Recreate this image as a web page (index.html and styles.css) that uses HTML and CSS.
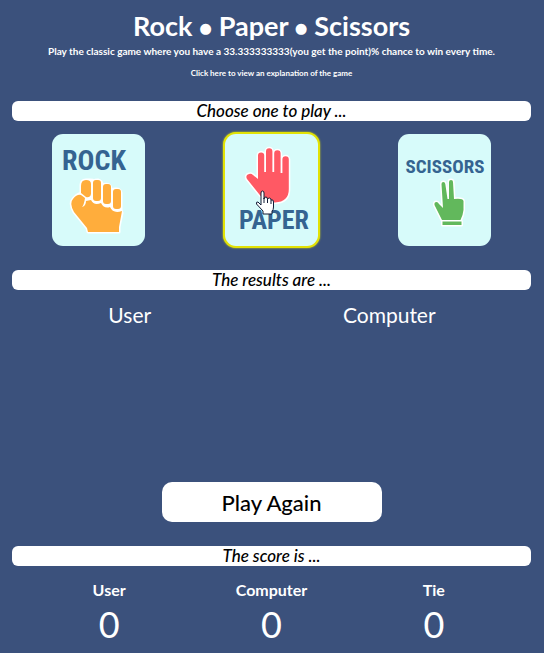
FILE: index.html
```
<!DOCTYPE html>
<html lang="en">
<head>
<meta charset="utf-8">
<meta name="viewport" content="width=device-width, initial-scale=1">
<title>Rock Paper Scissors</title>
<link rel="stylesheet" href="styles.css">
</head>
<body>
<header class="intro">
  <h1 class="title">Rock <span class="dot">●</span> Paper <span class="dot">●</span> Scissors</h1>
  <p class="tagline">Play the classic game where you have a 33.333333333(you get the point)% chance to win every time.</p>
  <a class="explain" href="#">Click here to view an explanation of the game</a>
</header>
<main>
  <h2 class="bar">Choose one to play ...</h2>
  <section class="choices">
    <button class="card" type="button" aria-label="Rock">
      <svg viewBox="0 0 93 112" aria-hidden="true">
        <text class="name rock-name" x="42" y="36">ROCK</text>
        <g class="fist">
          <path class="halo" d="M36 98L35 94L22 78Q17 69 21 65Q24 61 29 59V51Q29 46 34 46H38Q41 46 42 47Q43 46 46 46Q50 47 50 51Q59 48 59 56Q68 53 69 59V76L70 79L67 93V98Z"/>
          <path d="M36 98L35 94L22 78Q17 69 21 65Q25 60 29 61L33 64Q32 71 30 73Q34 72 34 67L39 66Q42 72 49 69Q52 75 58 73Q61 80 70 77L67 93V98Z"/>
          <path d="M29 52Q29 46 34 46Q39 46 39 50V60Q38 64 34 63L29 59Z"/>
          <rect x="41" y="46" width="8" height="21" rx="3"/>
          <rect x="51" y="50" width="8" height="20" rx="3"/>
          <rect x="61" y="55" width="8" height="20" rx="3"/>
        </g>
      </svg>
    </button>
    <button class="card selected" type="button" aria-label="Paper">
      <svg viewBox="0 0 93 112" aria-hidden="true">
        <text class="name paper-name" x="49" y="95">PAPER</text>
        <path class="palm" d="M33 45V21.500a3 3 0 0 1 6.200 0V38H41V17.500a3.200 3.200 0 0 1 6.400 0V38H49.200V19.500a3.200 3.200 0 0 1 6.400 0V39H57.400V25.500a3.200 3.200 0 0 1 6.400 0V55Q64 68 50 68.500Q39 68 34 60L22 45Q20 41 24 40Q26 39 28 41Z"/>
      </svg>
      <svg class="pointer" viewBox="0 0 20 25" aria-hidden="true">
        <path d="M6 15V3Q6 1 7.500 1Q9 1 9 3V9Q9 7 11 7Q12.500 7 12.500 9.500Q13 8 14.500 8Q16 8 16 10Q18.500 9 18.500 12V17Q18.500 20 17 21V24H8V21L1.500 14Q1 11.500 3 12Z"/>
        <path class="knuckles" d="M9 8V13M12.500 9V13M16 10V14"/>
      </svg>
    </button>
    <button class="card" type="button" aria-label="Scissors">
      <svg viewBox="0 0 93 112" aria-hidden="true">
        <text class="name scissors-name" x="47" y="39">SCISSORS</text>
        <path class="victory" d="M44 86L36.500 71Q36 68 38.500 68Q40 68 41 70L45 74L43.500 50Q43.500 48 45.400 48Q47 48 47.300 50L49.500 65H51V48Q51 46 53 46Q55 46 55 48L56 65Q65 64 65.500 67V76Q65 81 62.500 86Z"/>
        <rect class="victory" x="44.500" y="87.500" width="19" height="3.500"/>
      </svg>
    </button>
  </section>
  <h2 class="bar">The results are ...</h2>
  <section class="results">
    <h3 class="player">User</h3>
    <h3 class="player">Computer</h3>
  </section>
  <button class="again" type="button">Play Again</button>
  <h2 class="bar">The score is ...</h2>
  <dl class="scores">
    <div class="score"><dt>User</dt><dd>0</dd></div>
    <div class="score"><dt>Computer</dt><dd>0</dd></div>
    <div class="score"><dt>Tie</dt><dd>0</dd></div>
  </dl>
</main>
</body>
</html>
```
FILE: styles.css
```
* {
  box-sizing: border-box;
  margin: 0;
  padding: 0;
}

body {
  padding: 8px 13px 8px 12px;
  background: #3b517c;
  color: #fff;
  font-family: "Lato", "Noto Sans", sans-serif;
}

.intro {
  display: flex;
  flex-direction: column;
  align-items: center;
  text-align: center;
}

.title {
  font-size: 27px;
  line-height: 36px;
}

.dot {
  font-size: 22px;
  line-height: 1;
}

.tagline {
  margin-bottom: 10px;
  font-size: 10px;
  line-height: 14px;
  font-weight: bold;
}

.explain {
  margin-bottom: 23px;
  color: inherit;
  font-size: 8px;
  line-height: 10px;
  font-weight: bold;
  text-decoration: none;
}

.bar {
  border-radius: 6px;
  background: #fff;
  color: #000;
  font-size: 17px;
  line-height: 20px;
  font-style: italic;
  font-weight: 500;
  text-align: center;
}

.choices {
  display: grid;
  grid-template-columns: repeat(3, 1fr);
  justify-items: center;
  padding: 13px 0 24px;
}

.card {
  position: relative;
  width: 93px;
  border: 0;
  border-radius: 11px;
  background: #d7fbfa;
  cursor: pointer;
}

.card svg {
  display: block;
  width: 100%;
}

.selected {
  box-shadow: 0 0 0 2px #e2e204, 0 0 2px 2px #e2e204;
}

.name {
  fill: #356491;
  font-family: "Roboto Condensed", "Roboto", sans-serif;
  font-weight: bold;
  text-anchor: middle;
}

.rock-name {
  font-size: 28px;
}

.paper-name {
  font-size: 26px;
}

.scissors-name {
  font-size: 19px;
}

.fist {
  fill: #ffad3c;
}

.halo {
  fill: #fff;
  stroke: #fff;
  stroke-width: 3;
  stroke-linejoin: round;
}

.palm,
.victory {
  stroke: #fff;
  stroke-width: 3;
  stroke-linejoin: round;
  paint-order: stroke;
}

.palm {
  fill: #ff5964;
}

.victory {
  fill: #62b85c;
}

.card .pointer {
  position: absolute;
  top: 56px;
  left: 30px;
  width: 20px;
  fill: #fff;
  stroke: #111a35;
  stroke-linejoin: round;
}

.knuckles {
  fill: none;
}

.results {
  display: grid;
  grid-template-columns: repeat(2, 1fr);
  min-height: 192px;
  margin: 0 12px 0 -12px;
  padding-top: 12px;
  text-align: center;
}

.player {
  font-size: 21px;
  line-height: 26px;
  font-weight: 400;
}

.again {
  display: block;
  width: 220px;
  height: 40px;
  margin: 0 auto 24px;
  border: 0;
  border-radius: 10px;
  background: #fff;
  color: #000;
  font: 500 22px "Lato", "Noto Sans", sans-serif;
}

.scores {
  display: grid;
  grid-template-columns: repeat(3, 1fr);
  padding: 13px 16px 0;
  text-align: center;
}

.score dt {
  font-size: 16px;
  line-height: 22px;
  font-weight: bold;
}

.score dd {
  font-size: 36px;
  line-height: 46px;
}
```
